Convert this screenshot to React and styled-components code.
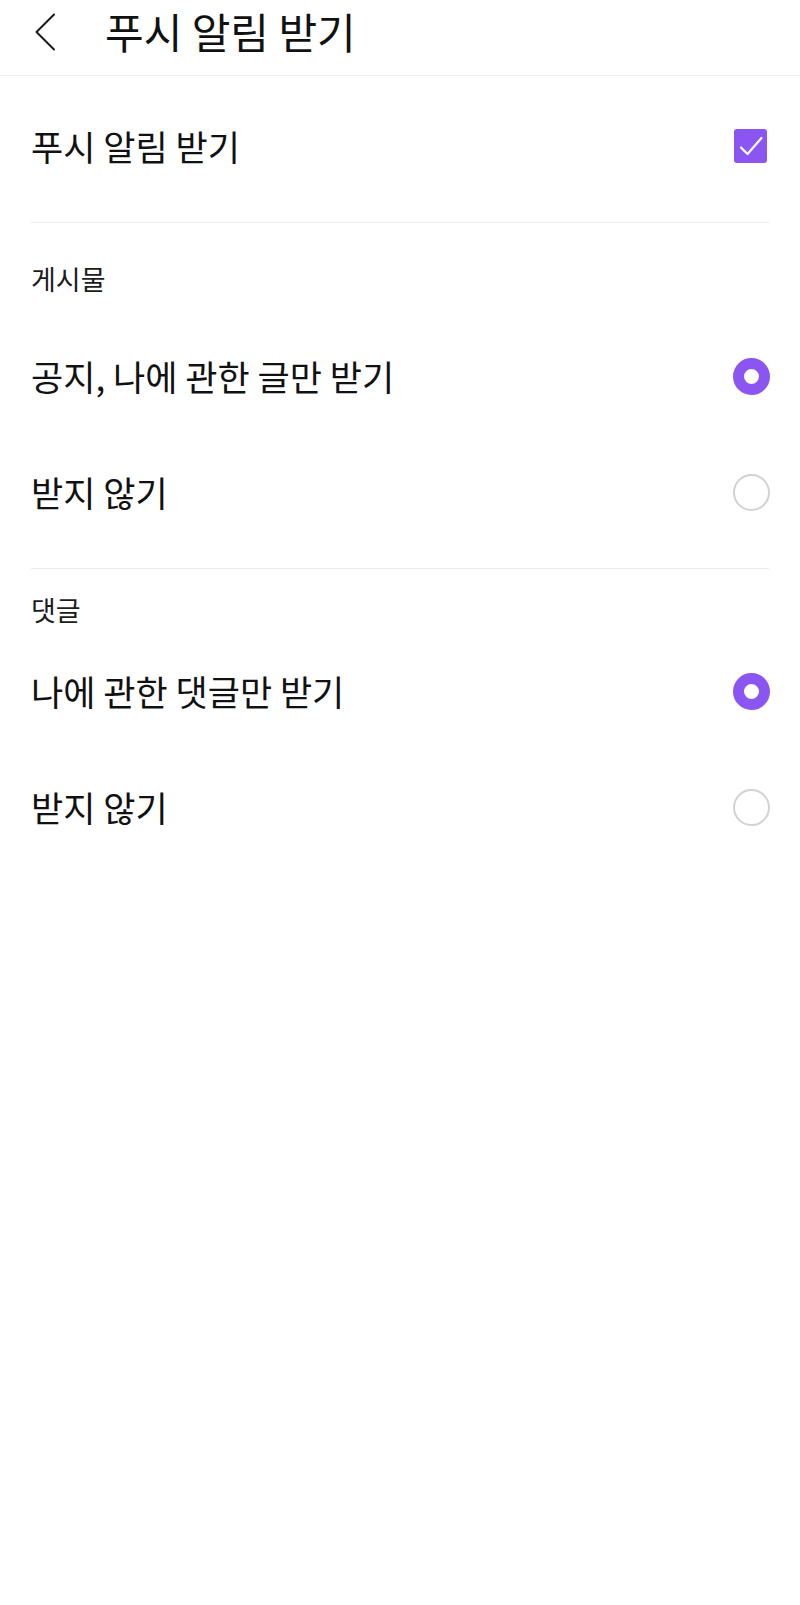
import React from "react";
import styled, { createGlobalStyle } from "styled-components";

const GlobalStyle = createGlobalStyle`
  html, body { margin: 0; padding: 0; background: #ffffff; }
  body {
    font-family: "Noto Sans CJK KR", "Noto Sans", sans-serif;
    color: #111111;
    -webkit-font-smoothing: antialiased;
  }
`;

const Page = styled.div`
  width: 800px;
  min-height: 1605px;
  background: #ffffff;
`;

const Header = styled.header`
  height: 75px;
  display: flex;
  align-items: center;
  border-bottom: 1px solid #f1f1f1;
`;

const BackButton = styled.button`
  width: 105px;
  height: 75px;
  padding: 0 0 12px 34px;
  box-sizing: border-box;
  border: none;
  background: none;
  display: flex;
  align-items: center;
  cursor: pointer;
`;

const Title = styled.h1`
  margin: 0;
  font-size: 42px;
  font-weight: 400;
  line-height: 1;
  color: #111111;
  padding-bottom: 13px;
`;

const Content = styled.main`
  padding: 0 31px;
`;

const Row = styled.div`
  height: ${(p) => p.$height || 116}px;
  padding-bottom: ${(p) => p.$padBottom || 0}px;
  box-sizing: border-box;
  display: flex;
  align-items: center;
  justify-content: space-between;
`;

const RowLabel = styled.span`
  font-size: 35px;
  line-height: 40px;
  color: #111111;
`;

const Divider = styled.hr`
  margin: 0;
  margin-top: ${(p) => p.$top || 0}px;
  border: none;
  height: 1px;
  background: #ececec;
`;

const SectionTitle = styled.div`
  font-size: 27px;
  line-height: 30px;
  color: #1c1c1c;
  margin-top: ${(p) => p.$top}px;
  margin-bottom: ${(p) => p.$bottom}px;
`;

const CheckBox = styled.span`
  width: 33px;
  height: 34px;
  border-radius: 3px;
  background: #8b55f2;
  display: flex;
  align-items: center;
  justify-content: center;
  margin-right: 2px;
`;

const Radio = styled.span`
  width: 37px;
  height: 37px;
  box-sizing: border-box;
  border-radius: 50%;
  border: ${(p) => (p.$checked ? "11.5px solid #8b55f2" : "2px solid #d2d2d2")};
  background: #ffffff;
  margin-right: -1px;
`;

function Chevron() {
  return (
    <svg width="22" height="38" viewBox="0 0 22 38" fill="none">
      <path d="M20 1.5 L2.5 19 L20 36.5" stroke="#1a1a1a" strokeWidth="2" strokeLinecap="round" strokeLinejoin="round" />
    </svg>
  );
}

function Check() {
  return (
    <svg width="26" height="22" viewBox="0 0 26 22" fill="none">
      <path d="M3 12.5 L9.5 19 L23.5 3" stroke="#ffffff" strokeWidth="2.2" strokeLinecap="round" strokeLinejoin="round" />
    </svg>
  );
}

const sections = [
  {
    title: "게시물",
    top: 41,
    bottom: 24,
    options: [
      { label: "공지, 나에 관한 글만 받기", checked: true },
      { label: "받지 않기", checked: false },
    ],
  },
  {
    title: "댓글",
    top: 26,
    bottom: 8,
    options: [
      { label: "나에 관한 댓글만 받기", checked: true },
      { label: "받지 않기", checked: false },
    ],
  },
];

export default function App() {
  return (
    <Page>
      <GlobalStyle />
      <Header>
        <BackButton aria-label="뒤로">
          <Chevron />
        </BackButton>
        <Title>푸시 알림 받기</Title>
      </Header>
      <Content>
        <Row $height={146} $padBottom={6}>
          <RowLabel>푸시 알림 받기</RowLabel>
          <CheckBox>
            <Check />
          </CheckBox>
        </Row>
        {sections.map((s, i) => (
          <section key={s.title}>
            <Divider $top={i === 0 ? 0 : 18} />
            <SectionTitle $top={s.top} $bottom={s.bottom}>
              {s.title}
            </SectionTitle>
            {s.options.map((o) => (
              <Row key={o.label}>
                <RowLabel>{o.label}</RowLabel>
                <Radio $checked={o.checked} />
              </Row>
            ))}
          </section>
        ))}
      </Content>
    </Page>
  );
}
